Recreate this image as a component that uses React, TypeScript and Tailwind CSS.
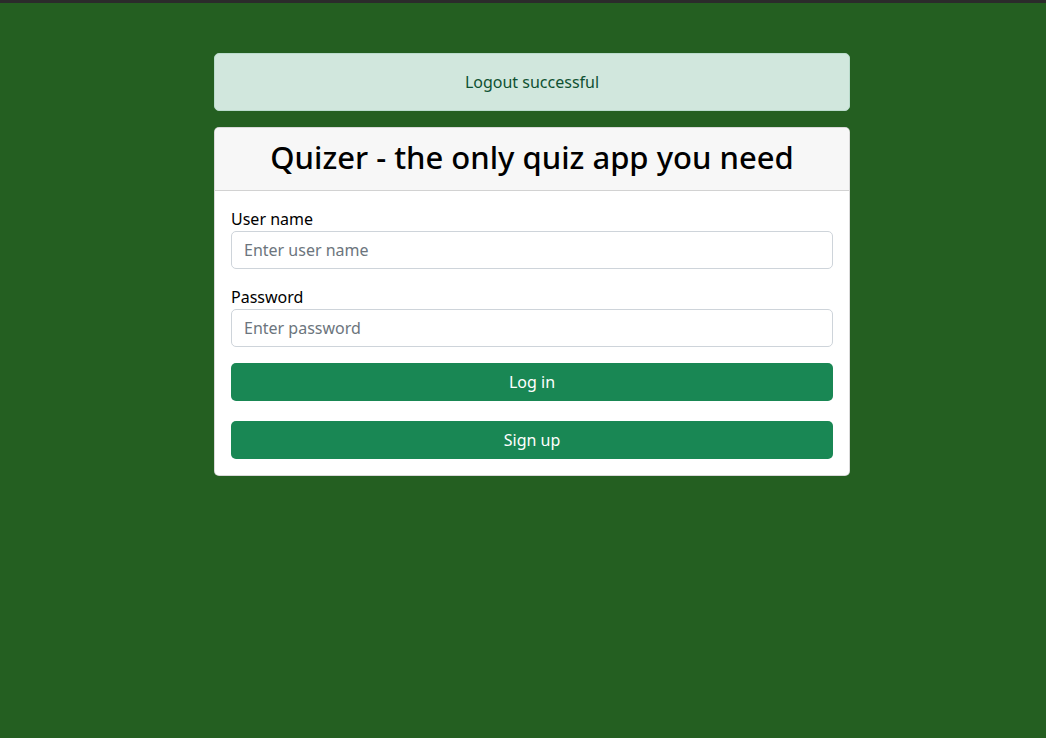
import { useState } from 'react';

export default function App() {
  const [userName, setUserName] = useState('');
  const [password, setPassword] = useState('');

  return (
    <div className="min-h-screen bg-[#245f21] font-['Noto_Sans',sans-serif] text-[#212529]">
      {/* top strip */}
      <div className="h-[3px] bg-[#2b2b2b]" />

      <div className="w-[636px] ml-[214px] pt-[50px]">
        {/* Alert */}
        <div className="mb-4 rounded-[5px] border border-[#badbcc] bg-[#d1e7dd] px-4 py-4 text-center text-base leading-6 text-[#0f5132]">
          Logout successful
        </div>

        {/* Login card */}
        <div className="rounded-[5px] border border-black/15 bg-white">
          <div className="rounded-t-[5px] border-b border-black/15 bg-[#f7f7f7] px-4 pt-[10px] pb-[14px] text-center">
            <h2 className="text-[31px] font-medium leading-[38px] text-black">Quizer - the only quiz app you need</h2>
          </div>
          <div className="p-4">
            <label className="block text-base leading-6 text-black">User name</label>
            <input
              value={userName}
              onChange={(e) => setUserName(e.target.value)}
              placeholder="Enter user name"
              className="block h-[38px] w-full rounded-[5px] border border-[#ced4da] px-3 text-base outline-none placeholder:text-[#6c757d]"
            />
            <label className="mt-4 block text-base leading-6 text-black">Password</label>
            <input
              type="password"
              value={password}
              onChange={(e) => setPassword(e.target.value)}
              placeholder="Enter password"
              className="block h-[38px] w-full rounded-[5px] border border-[#ced4da] px-3 text-base outline-none placeholder:text-[#6c757d]"
            />
            <button className="mt-4 block h-[38px] w-full rounded-[5px] bg-[#198754] text-base text-white">Log in</button>
            <button className="mt-5 block h-[38px] w-full rounded-[5px] bg-[#198754] text-base text-white">Sign up</button>
          </div>
        </div>
      </div>
    </div>
  );
}
